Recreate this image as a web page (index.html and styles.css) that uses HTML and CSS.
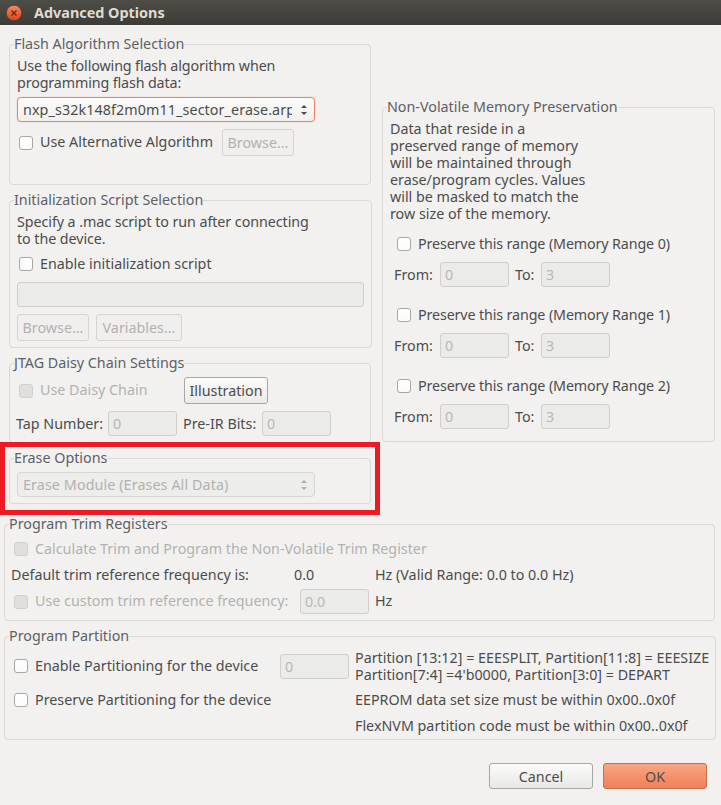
FILE: index.html
```html
<!DOCTYPE html>
<html lang="en">

<head>
  <meta charset="UTF-8">
  <title>Advanced Options</title>
  <link rel="stylesheet" href="styles.css">
</head>

<body>
  <div class="title_bar">
    <svg class="close_icon" width="18" height="18" viewBox="0 0 18 18">
      <defs>
        <linearGradient id="close_fill" x1="0" y1="0" x2="0" y2="1">
          <stop offset="0" stop-color="#f58a5c" />
          <stop offset="1" stop-color="#d9431c" />
        </linearGradient>
      </defs>
      <circle cx="9" cy="9" r="7.8" fill="url(#close_fill)" stroke="#33302b" stroke-width="0.6" />
      <path d="M6.5 6.5 L11.5 11.5 M11.5 6.5 L6.5 11.5" stroke="#5c2412" stroke-width="1.1" fill="none" />
    </svg>
    <span class="title_text">Advanced Options</span>
  </div>

  <div class="main">
    <div class="top_row">
      <div class="left_col">
        <fieldset class="group flash_group">
          <legend>Flash Algorithm Selection</legend>
          <p class="text">Use the following flash algorithm when<br>programming flash data:</p>
          <div class="select focused select_gap">
            <span class="select_text">nxp_s32k148f2m0m11_sector_erase.arp</span>
            <svg class="select_arrows" width="8" height="14" viewBox="0 0 8 14">
              <path d="M1 5 L4 2 L7 5 Z M1 9 L4 12 L7 9 Z" fill="#4c4c4c" />
            </svg>
          </div>
          <div class="row alt_row">
            <input class="check" type="checkbox">
            <span class="alt_label">Use Alternative Algorithm</span>
            <button class="btn" disabled>Browse...</button>
          </div>
        </fieldset>

        <fieldset class="group init_group">
          <legend>Initialization Script Selection</legend>
          <p class="text">Specify a .mac script to run after connecting<br>to the device.</p>
          <div class="row check_row init_check">
            <input class="check" type="checkbox">
            <span>Enable initialization script</span>
          </div>
          <input class="field wide_field" type="text" disabled>
          <div class="row init_btns">
            <button class="btn browse_btn" disabled>Browse...</button>
            <button class="btn variables_btn" disabled>Variables...</button>
          </div>
        </fieldset>

        <fieldset class="group jtag_group">
          <legend>JTAG Daisy Chain Settings</legend>
          <div class="row">
            <input class="check" type="checkbox" disabled>
            <span class="daisy_label muted">Use Daisy Chain</span>
            <button class="btn active_btn">Illustration</button>
          </div>
          <div class="row tap_row">
            <span class="tap_label">Tap Number:</span>
            <input class="field" type="text" value="0" disabled>
            <span class="ir_label">Pre-IR Bits:</span>
            <input class="field" type="text" value="0" disabled>
          </div>
        </fieldset>

        <div class="erase_wrap">
          <fieldset class="group erase_group">
            <legend>Erase Options</legend>
            <div class="select disabled">
              <span class="select_text">Erase Module (Erases All Data)</span>
              <svg class="select_arrows" width="8" height="14" viewBox="0 0 8 14">
                <path d="M1 5 L4 2 L7 5 Z M1 9 L4 12 L7 9 Z" fill="#b0aeac" />
              </svg>
            </div>
          </fieldset>
          <div class="erase_mark"></div>
        </div>
      </div>

      <fieldset class="group memory_group">
        <legend>Non-Volatile Memory Preservation</legend>
        <p class="text">Data that reside in a<br>preserved range of memory<br>will be maintained through<br>erase/program cycles. Values<br>will be masked to match the<br>row size of the memory.</p>

        <div class="row check_row range_check">
          <input class="check" type="checkbox">
          <span>Preserve this range (Memory Range 0)</span>
        </div>
        <div class="row range_row">
          <span class="from_label">From:</span>
          <input class="field" type="text" value="0" disabled>
          <span class="to_label">To:</span>
          <input class="field" type="text" value="3" disabled>
        </div>

        <div class="row check_row range_check next_range">
          <input class="check" type="checkbox">
          <span>Preserve this range (Memory Range 1)</span>
        </div>
        <div class="row range_row">
          <span class="from_label">From:</span>
          <input class="field" type="text" value="0" disabled>
          <span class="to_label">To:</span>
          <input class="field" type="text" value="3" disabled>
        </div>

        <div class="row check_row range_check next_range">
          <input class="check" type="checkbox">
          <span>Preserve this range (Memory Range 2)</span>
        </div>
        <div class="row range_row">
          <span class="from_label">From:</span>
          <input class="field" type="text" value="0" disabled>
          <span class="to_label">To:</span>
          <input class="field" type="text" value="3" disabled>
        </div>
      </fieldset>
    </div>

    <fieldset class="group wide_group trim_group">
      <legend>Program Trim Registers</legend>
      <div class="row check_row">
        <input class="check" type="checkbox" disabled>
        <span class="muted">Calculate Trim and Program the Non-Volatile Trim Register</span>
      </div>
      <div class="row check_row trim_row raised">
        <span class="default_label">Default trim reference frequency is:</span>
        <span class="default_value">0.0</span>
        <span>Hz (Valid Range: 0.0 to 0.0 Hz)</span>
      </div>
      <div class="row trim_row raised">
        <div class="row custom_cell">
          <input class="check" type="checkbox" disabled>
          <span class="muted">Use custom trim reference frequency:</span>
        </div>
        <input class="field" type="text" value="0.0" disabled>
        <span class="hz_label">Hz</span>
      </div>
    </fieldset>

    <fieldset class="group wide_group partition_group">
      <legend>Program Partition</legend>
      <div class="row">
        <div class="row partition_cell">
          <input class="check" type="checkbox">
          <span>Enable Partitioning for the device</span>
        </div>
        <input class="field" type="text" value="0" disabled>
        <p class="text partition_note">Partition [13:12] = EEESPLIT, Partition[11:8] = EEESIZE<br>Partition[7:4] =4'b0000, Partition[3:0] = DEPART</p>
      </div>
      <div class="row check_row preserve_row raised">
        <div class="row partition_cell_full">
          <input class="check" type="checkbox">
          <span>Preserve Partitioning for the device</span>
        </div>
        <span>EEPROM data set size must be within 0x00..0x0f</span>
      </div>
      <div class="row check_row flex_row raised">
        <span class="flex_note">FlexNVM partition code must be within 0x00..0x0f</span>
      </div>
    </fieldset>

    <div class="actions">
      <button class="btn action_btn">Cancel</button>
      <button class="btn action_btn ok_btn">OK</button>
    </div>
  </div>
</body>

</html>
```

FILE: styles.css
```css
* {
  box-sizing: border-box;
  margin: 0;
  padding: 0;
}

html,
body {
  background-color: #f2f1f0;
  height: 805px;
  overflow: hidden;
  width: 721px;
}

body {
  color: #4c4c4c;
  font-family: "Noto Sans", Arial, sans-serif;
  font-size: 14.3px;
  line-height: 17px;
}

.title_bar {
  align-items: center;
  background: linear-gradient(#4f4d47, #3c3b37);
  display: flex;
  height: 25px;
  padding-left: 5px;
}

.close_icon {
  margin-right: 11px;
}

.title_text {
  color: #dfdbd2;
  font-size: 14.4px;
  font-weight: 700;
}

.main {
  padding: 10px 6px 0 4px;
}

.top_row {
  display: flex;
  gap: 11px;
  padding-left: 5px;
}

.left_col {
  display: flex;
  flex-direction: column;
  gap: 6px;
  width: 362px;
}

.group {
  border: 1px solid #dbd9d6;
  border-radius: 4px;
  padding: 4px 7px 0;
}

.group legend {
  color: #5d6066;
  height: 18px;
  line-height: 18px;
  margin-left: -3px;
}

.text {
  white-space: nowrap;
}

.row {
  align-items: center;
  display: flex;
  white-space: nowrap;
}

.check_row {
  height: 24px;
}

.check + span,
.raised > span {
  padding-bottom: 2px;
}

.muted {
  color: #b3b1af;
}

/* checkboxes */
.check {
  appearance: none;
  background: linear-gradient(#ffffff, #fafafa);
  border: 1px solid #a9a7a4;
  border-radius: 3px;
  flex: none;
  height: 14px;
  margin: 0 7px 0 2px;
  width: 14px;
}

.check:disabled {
  background: #e0dfdd;
  border-color: #d2d0ce;
}

/* text fields */
.field {
  background-color: #ebebea;
  border: 1px solid #d0cecb;
  border-radius: 3px;
  color: #b9b7b5;
  flex: none;
  font-family: inherit;
  font-size: 14.3px;
  height: 25px;
  padding: 0 4px;
  width: 69px;
}

.wide_field {
  display: block;
  margin-top: 6px;
  width: 347px;
}

/* buttons */
.btn {
  background-color: #f0efee;
  border: 1px solid #d6d4d1;
  border-radius: 3px;
  color: #b3b1af;
  flex: none;
  font-family: inherit;
  font-size: 14.3px;
  height: 27px;
  width: 72px;
}

.active_btn {
  background: linear-gradient(#fbfbfa, #ecebe9);
  border-color: #a8a6a3;
  color: #4c4c4c;
  width: 84px;
}

.action_btn {
  background: linear-gradient(#fbfbfa, #e9e8e6);
  border-color: #a8a6a3;
  color: #4c4c4c;
  height: 26px;
  width: 104px;
}

.ok_btn {
  background: linear-gradient(#f9a684, #ef7f56);
  border-color: #c9704d;
}

/* combo boxes */
.select {
  align-items: center;
  background: linear-gradient(#fbfbfa, #f1f0ef);
  border: 1px solid #a8a6a3;
  border-radius: 4px;
  display: flex;
  height: 25px;
  padding: 0 6px 0 5px;
  width: 298px;
}

.select_text {
  flex: 1;
  letter-spacing: 0.1px;
  overflow: hidden;
  white-space: nowrap;
}

.select_arrows {
  flex: none;
  margin-left: 8px;
}

.focused {
  border-color: #ea8560;
  box-shadow: 0 0 1px #ea8560;
}

.disabled {
  background: #ededeb;
  border-color: #d8d6d3;
  color: #b3b1af;
}

/* flash group */
.flash_group {
  height: 150px;
}

.flash_group .text {
  letter-spacing: -0.13px;
}

.select_gap {
  margin-top: 6px;
}

.alt_row {
  margin-top: 7px;
}

.alt_label {
  width: 182px;
}

/* init group */
.init_group {
  height: 157px;
}

.init_group .text {
  letter-spacing: -0.07px;
}

.init_check {
  margin-top: 5px;
}

.init_btns {
  gap: 7px;
  margin-top: 7px;
}

.variables_btn {
  width: 86px;
}

/* jtag group */
.jtag_group {
  height: 89px;
  padding-top: 5px;
}

.daisy_label {
  width: 144px;
}

.tap_row {
  margin-top: 7px;
}

.tap_label {
  margin-left: -1px;
  width: 92px;
}

.ir_label {
  margin-left: 6px;
  width: 79px;
}

/* erase group */
.erase_wrap {
  position: relative;
}

.erase_group {
  height: 55px;
  padding-top: 5px;
}

.erase_mark {
  border: 5px solid #ed1c24;
  bottom: -11px;
  left: -9px;
  position: absolute;
  right: -9px;
  top: -7px;
}

/* memory group */
.memory_group {
  height: 344px;
  margin-top: 63px;
  width: 333px;
}

.range_check {
  letter-spacing: -0.13px;
  margin-top: 10px;
  padding-left: 5px;
}

.next_range {
  margin-top: 16px;
}

.range_row {
  margin-top: 6px;
  padding-left: 4px;
}

.from_label {
  width: 46px;
}

.to_label {
  margin-left: 6px;
  width: 26px;
}

/* wide groups */
.wide_group {
  padding: 4px 6px 0;
  width: 711px;
}

.wide_group legend {
  margin-left: -2px;
}

.wide_group .check {
  margin-left: 3px;
}

.trim_group {
  height: 106px;
  margin-top: 11px;
}

.trim_row {
  margin-top: 2px;
}

.default_label {
  width: 283px;
}

.default_value {
  width: 81px;
}

.custom_cell {
  width: 289px;
}

.hz_label {
  margin-left: 6px;
}

.partition_group {
  height: 113px;
  margin-top: 6px;
}

.partition_cell {
  width: 269px;
}

.partition_note {
  margin-left: 6px;
}

.partition_cell_full {
  width: 344px;
}

.preserve_row {
  margin-top: 5px;
}

.flex_row {
  margin-top: 2px;
}

.flex_note {
  margin-left: 344px;
}

.actions {
  display: flex;
  gap: 10px;
  justify-content: flex-end;
  margin-top: 23px;
  padding-right: 8px;
}
```
